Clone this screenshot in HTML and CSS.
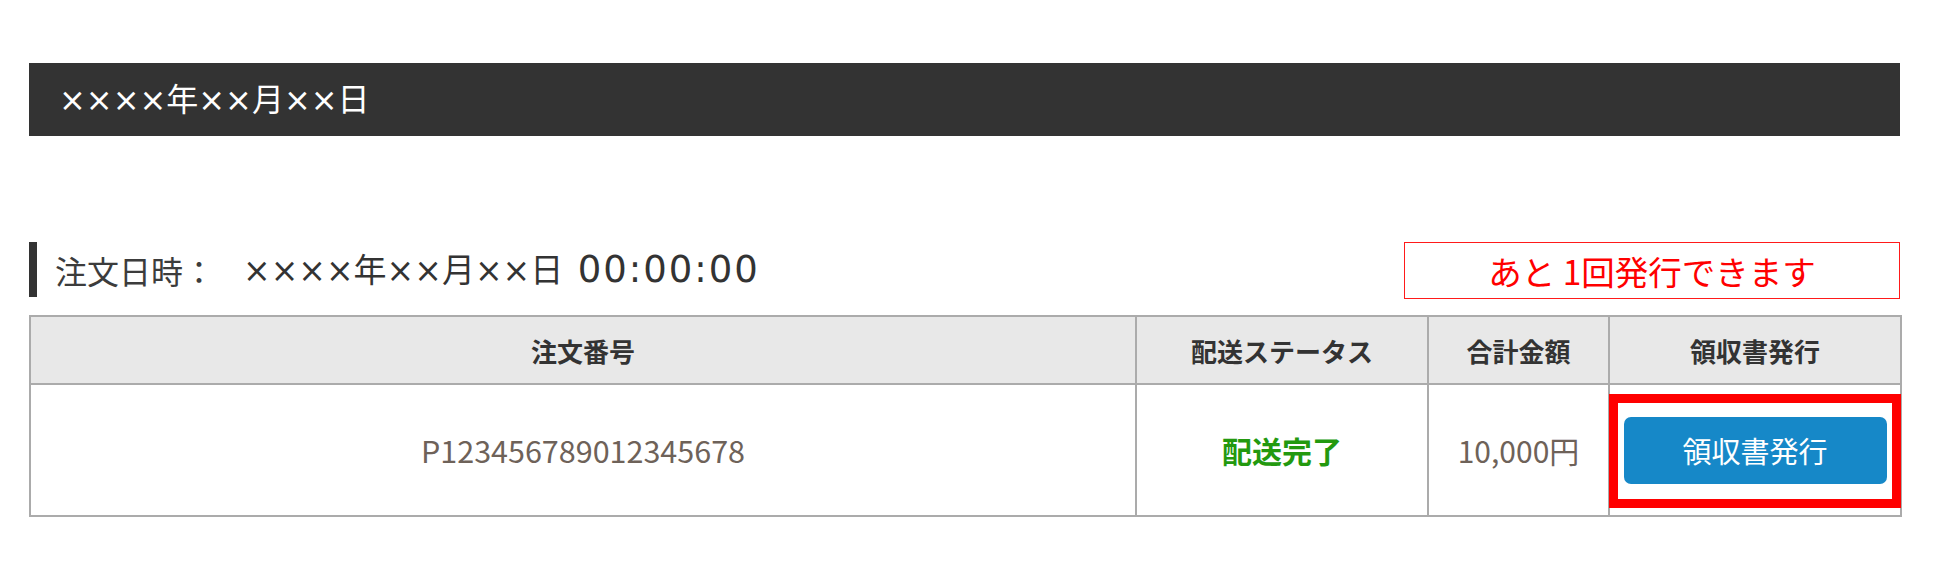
FILE: index.html
```html
<!DOCTYPE html>
<html lang="ja">
<head>
<meta charset="utf-8">
<title>領収書発行</title>
<link rel="stylesheet" href="styles.css">
</head>
<body>
<main class="page">
  <div class="date-bar">××××年××月××日</div>
  <section class="order">
    <div class="order-head">
      <h2 class="order-title"><span class="label">注文日時：</span><span class="datetime">××××年××月××日 <span class="time">00:00:00</span></span></h2>
      <div class="remaining">あと 1回発行できます</div>
    </div>
    <table class="order-table">
      <colgroup>
        <col class="c-no">
        <col class="c-status">
        <col class="c-total">
        <col class="c-receipt">
      </colgroup>
      <thead>
        <tr>
          <th>注文番号</th>
          <th>配送ステータス</th>
          <th>合計金額</th>
          <th>領収書発行</th>
        </tr>
      </thead>
      <tbody>
        <tr>
          <td class="order-no">P123456789012345678</td>
          <td class="status">配送完了</td>
          <td class="total">10,000円</td>
          <td class="receipt">
            <button class="receipt-btn" type="button">領収書発行</button>
            <span class="highlight"></span>
          </td>
        </tr>
      </tbody>
    </table>
  </section>
</main>
</body>
</html>
```

FILE: styles.css
```css
* { box-sizing: border-box; }

html, body {
  margin: 0;
  padding: 0;
  background: #ffffff;
}

body {
  font-family: "Noto Sans CJK JP", "Noto Sans", sans-serif;
  color: #333333;
}

.page {
  padding: 63px 36px 0 29px;
}

.date-bar {
  height: 73px;
  background: #333333;
  color: #ffffff;
  display: flex;
  align-items: center;
  padding-left: 30px;
  font-family: "DejaVu Sans", "Noto Sans CJK JP", sans-serif;
  font-size: 32px;
  line-height: 1;
}

.order {
  margin-top: 106px;
}

.order-head {
  display: flex;
  justify-content: space-between;
  align-items: flex-start;
  height: 57px;
}

.order-title {
  margin: 0;
  height: 55px;
  border-left: 8px solid #333333;
  padding-left: 18px;
  display: flex;
  align-items: center;
  font-weight: normal;
  line-height: 1;
  color: #333333;
}

.label {
  font-size: 32px;
  color: #3c3c3c;
}

.datetime {
  margin-left: 28px;
  font-family: "DejaVu Sans", "Noto Sans CJK JP", sans-serif;
  font-size: 33px;
}

.time {
  font-size: 37px;
  letter-spacing: 2px;
  margin-left: 4px;
}

.remaining {
  width: 496px;
  height: 57px;
  border: 1.5px solid #ff1a1a;
  color: #ff0000;
  font-size: 33.5px;
  display: flex;
  align-items: center;
  justify-content: center;
  line-height: 1;
}

.order-table {
  margin-top: 16px;
  width: 100%;
  table-layout: fixed;
  border-collapse: collapse;
  border: 2px solid #ababab;
}

.c-no { width: 1106px; }
.c-status { width: 292px; }
.c-total { width: 181px; }
.c-receipt { width: 292px; }

.order-table th,
.order-table td {
  border: 2px solid #ababab;
  text-align: center;
  vertical-align: middle;
  padding: 0;
}

.order-table th {
  height: 68px;
  background: #e8e8e8;
  font-size: 26px;
  font-weight: bold;
  color: #333333;
}

.order-table td {
  height: 132px;
  font-size: 30px;
  color: #6e6259;
}

.order-table .order-no {
  font-size: 30.5px;
}

.order-table .status {
  color: #23990f;
  font-weight: bold;
}

.receipt {
  position: relative;
}

.receipt-btn {
  width: 263px;
  height: 67px;
  border: none;
  border-radius: 7px;
  background: #1688c8;
  color: #ffffff;
  font-family: "Noto Sans CJK JP", "Noto Sans", sans-serif;
  font-size: 29px;
  line-height: 1;
  display: inline-flex;
  align-items: center;
  justify-content: center;
  vertical-align: middle;
}

.highlight {
  position: absolute;
  left: -1px;
  right: -1px;
  top: 9px;
  bottom: 7px;
  border: 9px solid #ff0000;
  pointer-events: none;
}
```
